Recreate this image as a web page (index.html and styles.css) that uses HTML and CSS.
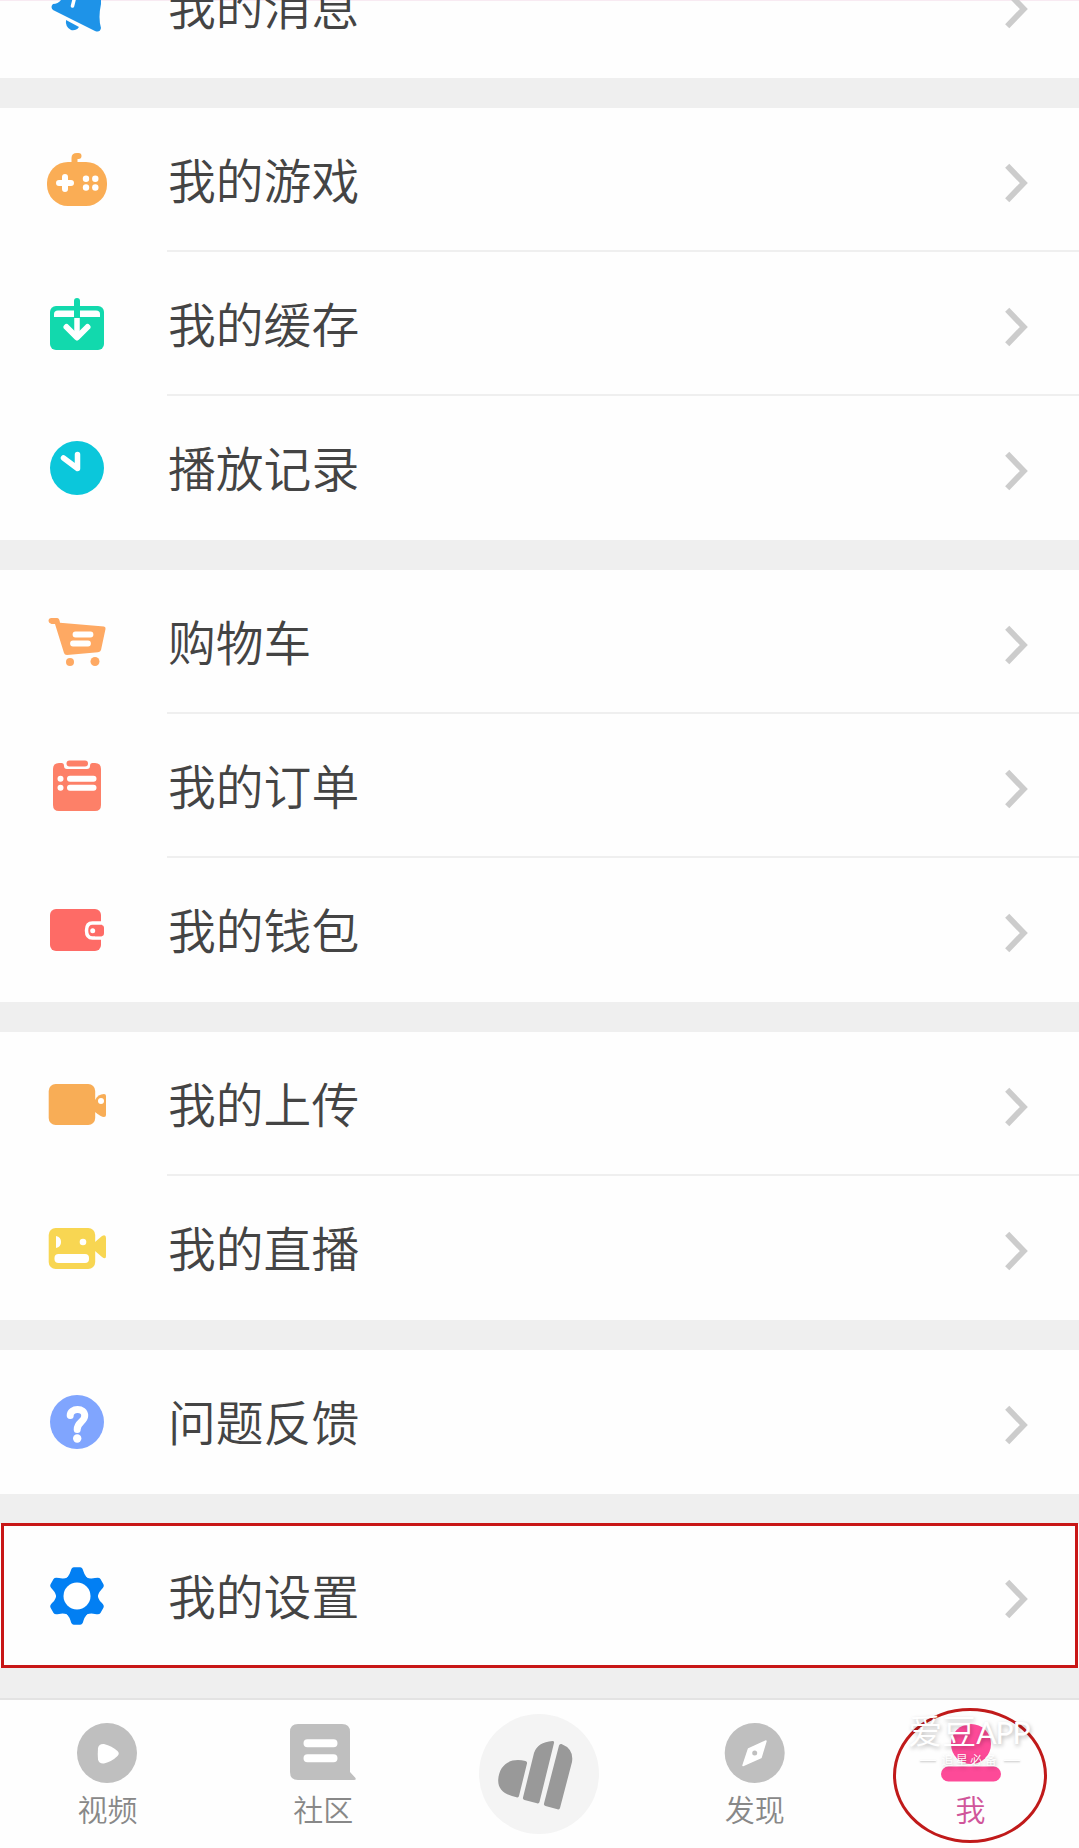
FILE: index.html
```html
<!DOCTYPE html>
<html lang="zh-CN">
<head>
<meta charset="utf-8">
<title>我的</title>
<link rel="stylesheet" href="styles.css">
</head>
<body>
<svg class="defs" width="0" height="0">
  <symbol id="chevron" viewBox="0 0 28 44"><path d="M3.200 4.800 19.800 22 3.200 39.200" fill="none" stroke="#ccc" stroke-width="5.800"/></symbol>
</svg>
<main class="screen">
  <section class="group group-cut">
    <div class="row">
      <svg class="icon" viewBox="41 36 72 72" fill="#1e93e8"><path d="M66 53 61 66Q58 70 53 70Q50 73 53 76L95 97Q100 99 101 94Q98 84 101 70V53z"/><path d="M66 86Q65 93 71 96Q76 97 79 93z"/><path d="M76 58 72.500 72" stroke="#fff" stroke-width="3.500" stroke-linecap="round"/></svg>
      <span class="label">我的消息</span><svg class="chevron"><use href="#chevron"/></svg>
    </div>
  </section>
  <section class="group">
    <div class="row">
      <svg class="icon" viewBox="41 36 72 72" fill="#faad55"><rect x="47" y="54" width="60" height="44" rx="21"/><path d="M74.500 58V50Q74.500 48 77 48H78.500" fill="none" stroke="#faad55" stroke-width="6" stroke-linecap="round"/><path d="M59 75H71M65 69V81" stroke="#fff" stroke-width="6" stroke-linecap="round"/><g fill="#fff"><circle cx="86" cy="70.700" r="3.200"/><circle cx="95.300" cy="70.700" r="3.200"/><circle cx="86" cy="79.500" r="3.200"/><circle cx="95.300" cy="79.500" r="3.200"/></g></svg>
      <span class="label">我的游戏</span><svg class="chevron"><use href="#chevron"/></svg>
    </div>
    <div class="row">
      <svg class="icon" viewBox="41 36 72 72"><rect x="50" y="54" width="54" height="44" rx="6" fill="#12d9ad"/><path d="M54 65V62Q54 58.500 58 58.500H96Q100 58.500 100 62V65z" fill="#fff"/><path d="M77 49V65" stroke="#12d9ad" stroke-width="6" stroke-linecap="round"/><path d="M77 66V86" stroke="#fff" stroke-width="5.500"/><path d="M66.500 75 77 85.500 87.500 75" fill="none" stroke="#fff" stroke-width="6" stroke-linecap="round" stroke-linejoin="round"/></svg>
      <span class="label">我的缓存</span><svg class="chevron"><use href="#chevron"/></svg>
    </div>
    <div class="row">
      <svg class="icon" viewBox="41 36 72 72"><circle cx="77" cy="72" r="27" fill="#0bc7db"/><path d="M77.500 58.500V72.500L63.500 62" fill="none" stroke="#fff" stroke-width="5.500" stroke-linecap="round" stroke-linejoin="round"/></svg>
      <span class="label">播放记录</span><svg class="chevron"><use href="#chevron"/></svg>
    </div>
  </section>
  <section class="group">
    <div class="row">
      <svg class="icon" viewBox="41 36 72 72" fill="#fea963"><path d="M51.500 48H57Q59.500 48 60 52.700L104 56.500Q106 57 105.500 59L101 80Q100.500 82 98 82.300L67 85Q64.500 85 64 83L55 54H51.500Q48.500 53 48.500 51Q48.500 48 51.500 48z"/><circle cx="70" cy="92" r="4"/><circle cx="95" cy="91.500" r="4.500"/><path d="M75.500 64.500H90.500M73 73.500H88" stroke="#fff" stroke-width="5.800" stroke-linecap="round"/></svg>
      <span class="label">购物车</span><svg class="chevron"><use href="#chevron"/></svg>
    </div>
    <div class="row">
      <svg class="icon" viewBox="41 36 72 72" fill="#fd8068"><path d="M59 49H61.500Q64 49 64 52Q64 55 67 55H87Q90 55 90 52Q90 49 92.500 49H95Q101 49 101 55V91Q101 97 95 97H59Q53 97 53 91V55Q53 49 59 49z"/><rect x="66.500" y="46.500" width="21.500" height="6" rx="3"/><g stroke="#fff" stroke-width="6" stroke-linecap="round"><path d="M60.500 64.700h.01M70 64.700H93.500M60.500 73.700h.01M70 73.700H93.500"/></g></svg>
      <span class="label">我的订单</span><svg class="chevron"><use href="#chevron"/></svg>
    </div>
    <div class="row">
      <svg class="icon" viewBox="41 36 72 72" fill="#fe6b66"><rect x="50" y="51" width="51" height="42" rx="6"/><path d="M102 65H92.500Q86.500 65 86.500 72.500Q86.500 80 92.500 80H102" fill="#fe6b66" stroke="#fff" stroke-width="3.500"/><path d="M95 67H101Q104 67 104 70V75Q104 78.200 101 78.200H95z"/><circle cx="92.700" cy="72.700" r="2.500" fill="#fff"/></svg>
      <span class="label">我的钱包</span><svg class="chevron"><use href="#chevron"/></svg>
    </div>
  </section>
  <section class="group">
    <div class="row">
      <svg class="icon" viewBox="41 36 72 72" fill="#f8ad56"><rect x="48.700" y="52" width="46.500" height="41" rx="7"/><path d="M95 68Q98 62 104 62Q106 62 106 64V83Q106 85 104 85Q101 85 95 80z"/><circle cx="101" cy="69" r="3" fill="#fff"/></svg>
      <span class="label">我的上传</span><svg class="chevron"><use href="#chevron"/></svg>
    </div>
    <div class="row">
      <svg class="icon" viewBox="41 36 72 72" fill="#f8d652"><rect x="48.700" y="52" width="46.500" height="41" rx="7"/><path d="M95 66 102 60Q106 58 106 62V80Q106 84 102 81L95 75z"/><path d="M56 60Q61 61 61 66Q61 71 56 72z" fill="#fff"/><circle cx="83" cy="66" r="3.300" fill="#fff"/><rect x="54.500" y="78" width="34.500" height="9" rx="4" fill="#fff"/></svg>
      <span class="label">我的直播</span><svg class="chevron"><use href="#chevron"/></svg>
    </div>
  </section>
  <section class="group">
    <div class="row">
      <svg class="icon" viewBox="41 36 72 72"><circle cx="77" cy="72" r="27" fill="#80a5fe"/><path d="M70.200 65.500C70 58 85 57 84.700 66C84.500 72 77.200 72 77.200 79.500" fill="none" stroke="#fff" stroke-width="7" stroke-linecap="round"/><circle cx="77.200" cy="88.500" r="4.200" fill="#fff"/></svg>
      <span class="label">问题反馈</span><svg class="chevron"><use href="#chevron"/></svg>
    </div>
  </section>
  <section class="group highlighted">
    <div class="row">
      <svg class="icon" viewBox="-36 -36 72 72" fill="#027ff3"><circle r="21"/><path id="tooth" d="M-14-15Q-8-19-6.500-24.500Q-5.500-28.800-3-28.800H3Q5.500-28.800 6.500-24.500Q8-19 14-15z"/><use href="#tooth" transform="rotate(60)"/><use href="#tooth" transform="rotate(120)"/><use href="#tooth" transform="rotate(180)"/><use href="#tooth" transform="rotate(240)"/><use href="#tooth" transform="rotate(300)"/><circle r="13.500" fill="#fff"/></svg>
      <span class="label">我的设置</span><svg class="chevron"><use href="#chevron"/></svg>
    </div>
  </section>
  <nav class="tabs">
    <div class="tab"><svg class="tab-icon" viewBox="0 0 72 72"><circle cx="35" cy="36" r="30" fill="#bfbfbf"/><path d="M26 31Q27 26.500 32 27Q40 29 45.500 34Q48 36.500 45.500 39Q40 44.500 32 46.500Q27 47 26 42.500Q25.500 37 26 31z" fill="#fff"/></svg><span>视频</span></div>
    <div class="tab"><svg class="tab-icon" viewBox="0 0 72 72"><path d="M10 7H54Q62 7 62 15V55L67.500 61Q68.500 63 66 63H10Q2 63 2 55V15Q2 7 10 7z" fill="#bfbfbf"/><path d="M19.500 26.200H45.500M19.500 41.200H45.500" stroke="#fff" stroke-width="8" stroke-linecap="round"/></svg><span>社区</span></div>
    <div class="tab tab-main"><svg class="main-icon" viewBox="0 0 120 120"><circle cx="60" cy="60" r="60" fill="#f4f4f4"/><g fill="#999"><path d="M46.500 47Q48.500 47.500 48 49.500L40 82Q39.500 84 37.500 83.300C26 80.500 19 76 19.200 66C20 51 31 43 46.500 47z"/><path d="M73.500 27Q75.500 27 75 29L60.500 88Q60 90 58 89.300L45.500 86Q43.500 85.500 44 83.500L55 39Q58.500 28 73.500 27z"/><path d="M80 31.500Q80.500 29.500 82.500 30Q95 35 93 48L81 94Q80.500 96 78.500 95.300L66.500 92Q64.500 91.500 65 89.500z"/></g></svg></div>
    <div class="tab"><svg class="tab-icon" viewBox="0 0 72 72"><circle cx="35.700" cy="36" r="30" fill="#bfbfbf"/><path d="M47 24 42 40.500 24 48.500 29.500 32z" fill="#fff" stroke="#fff" stroke-width="1.500" stroke-linejoin="round"/><circle cx="35.700" cy="36" r="2.500" fill="#bfbfbf"/></svg><span>发现</span></div>
    <div class="tab tab-active"><svg class="tab-icon" viewBox="0 0 72 72" fill="#fd4a98"><circle cx="36" cy="27" r="20"/><rect x="6" y="49.500" width="60" height="15" rx="7.500"/></svg><span>我</span>
      <div class="ring"></div>
      <div class="watermark"><div class="wm-title">爱豆<b>APP</b></div><div class="wm-sub"><i></i>追星必备<i></i></div></div>
    </div>
  </nav>
</main>
</body>
</html>
```
FILE: styles.css
```css
* { box-sizing: border-box; }
body {
  margin: 0;
  background: #efefef;
  font-family: "Noto Sans CJK SC", sans-serif;
}
.defs { position: absolute; }
.screen {
  width: 1079px;
  height: 1848px;
  display: flex;
  flex-direction: column;
  gap: 30px;
  overflow: hidden;
}
.group {
  position: relative;
  flex: none;
  background: #fefefe;
}
.group-cut {
  height: 78px;
  display: flex;
  flex-direction: column;
  justify-content: flex-end;
  overflow: hidden;
  box-shadow: inset 0 1px #f8eaf2;
}
.row {
  flex: none;
  height: 144px;
  display: flex;
  align-items: center;
  padding: 0 47px 0 41px;
}
.row:not(:last-child) {
  background: linear-gradient(#efefef, #efefef) 167px 100% / 912px 2px no-repeat;
}
.icon { width: 72px; height: 72px; flex: none; }
.label {
  flex: 1;
  margin-left: 55px;
  padding-bottom: 2px;
  font-size: 47.8px;
  line-height: 70px;
  font-weight: 350;
  color: #444;
}
.chevron { width: 28px; height: 44px; margin-top: 5px; }
.highlighted::after {
  content: "";
  position: absolute;
  inset: -1px 1px 0 1px;
  border: 3px solid #c81616;
}
.tabs {
  flex: none;
  height: 150px;
  display: grid;
  grid-template-columns: repeat(5, 1fr);
  background: #fefefe;
  border-top: 2px solid #e3e3e3;
}
.tab {
  position: relative;
  display: flex;
  flex-direction: column;
  align-items: center;
  padding-top: 17px;
  font-size: 30px;
  line-height: 38px;
  font-weight: 350;
  color: #888;
}
.tab-icon { width: 72px; height: 72px; flex: none; }
.tab span { margin-right: 1px; }
.tab-main { padding-top: 14px; }
.main-icon { width: 120px; height: 120px; }
.tab-active { color: #d0559a; }
.ring {
  position: absolute;
  left: 30px;
  top: 8px;
  width: 154px;
  height: 135px;
  border: 3px solid #c01a1a;
  border-radius: 50%;
}
.watermark {
  position: absolute;
  left: 45px;
  top: 7px;
  width: 124px;
  color: #fff;
  text-shadow: 1px 2px 4px rgba(0, 0, 0, .28);
  white-space: nowrap;
}
.wm-title { font-size: 34px; line-height: 46px; font-weight: 350; }
.wm-title b { font: 400 30px/46px Lato, sans-serif; letter-spacing: -1px; }
.wm-sub {
  display: flex;
  align-items: center;
  justify-content: center;
  gap: 5px;
  margin-top: -2px;
  font-size: 12px;
  line-height: 14px;
  letter-spacing: 2.5px;
}
.wm-sub i { width: 16px; height: 1px; background: #fff; box-shadow: 0 1px 2px rgba(0, 0, 0, .3); }
```
